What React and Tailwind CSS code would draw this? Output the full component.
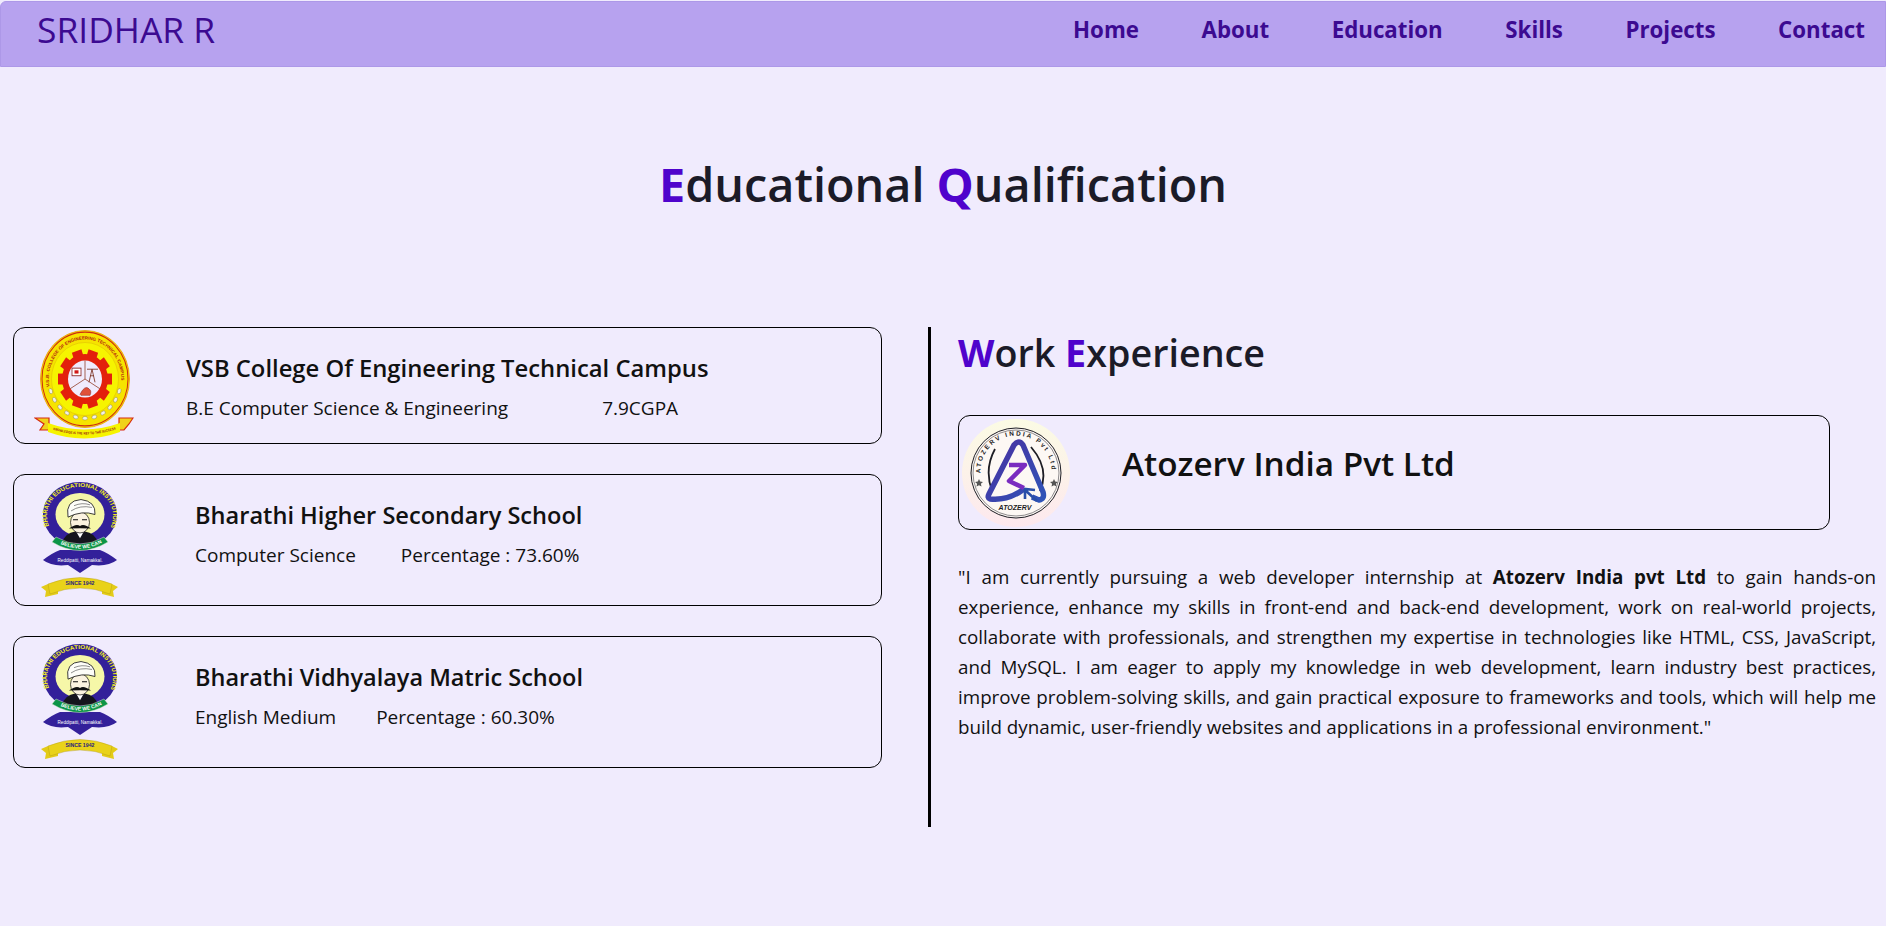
import React from 'react'

const NAV_LINKS = ['Home', 'About', 'Education', 'Skills', 'Projects', 'Contact']

function VsbLogo() {
  const teeth = [0, 36, 72, 108, 144, 180, 216, 252, 288, 324]
  const leaves = [-72, -58, -44, -30, -15, 0, 15, 30, 44, 58, 72]
  return (
    <svg viewBox="0 0 100 112" className="w-[100px] h-[112px] shrink-0">
      <g transform="translate(0 -3.3) scale(1 1.09)">
        <circle cx="51" cy="48" r="44.5" fill="#f6e300" stroke="#e89a08" strokeWidth="0.8" />
        <circle cx="51" cy="48" r="43" fill="none" stroke="#cf2a10" strokeWidth="1" />
        <circle cx="51" cy="48" r="33.5" fill="#f6f400" stroke="#d8b008" strokeWidth="0.4" />
        <path id="vsbArc" d="M 15.5 55 A 36.2 36.2 0 1 1 86.5 55" fill="none" />
        <text fontSize="4.2" fontFamily="Liberation Sans, sans-serif" fontWeight="700" fill="#b51f10">
          <textPath href="#vsbArc" textLength="122" lengthAdjust="spacingAndGlyphs">V.S.B. COLLEGE OF ENGINEERING TECHNICAL CAMPUS</textPath>
        </text>
        <g transform="translate(0 2)">
          {teeth.map(a => (
            <rect key={a} x="46" y="19" width="10" height="10" fill="#e3200c" transform={`rotate(${a + 18} 51 46)`} />
          ))}
          <circle cx="51" cy="46" r="23" fill="#e3200c" />
          <circle cx="51" cy="46" r="17" fill="#f0ebfd" />
          <path d="M51 29 V46 L36 55 M51 46 L66 55" stroke="#a05a4a" strokeWidth="0.9" fill="none" />
          <rect x="38" y="36" width="9" height="7" fill="#fff" stroke="#8a2020" strokeWidth="0.8" />
          <rect x="40.5" y="38" width="4" height="3" fill="#d01818" />
          <path d="M55 49 L58 37 L61 49 M56 43 H60 M53 37 H64" stroke="#7a3020" strokeWidth="0.8" fill="none" />
          <path d="M46 60 Q51 51 55 55 Q58 57 56 61 H47 Z" fill="#e0503a" stroke="#8a2020" strokeWidth="0.5" />
        </g>
        {leaves.map(a => (
          <ellipse key={a} cx="51" cy="84" rx="2.5" ry="1.7" fill="#f4f1e4" stroke="#7b7a50" strokeWidth="0.4" transform={`rotate(${a} 51 48)`} />
        ))}
      </g>
      <path d="M1 88 H15 V100 H6 L10 94 Z M99 88 H85 V100 H90 L95 94 Z" fill="#f0d21a" stroke="#d62a10" strokeWidth="1.2" />
      <path d="M14 93 Q50 106 86 93 V102 Q50 115 14 102 Z" fill="#f6f400" />
      <path id="vsbRibbon" d="M17 99 Q50 110 83 99" fill="none" />
      <text fontSize="3.5" fontFamily="Liberation Sans, sans-serif" fontWeight="700" fill="#9a1a10">
        <textPath href="#vsbRibbon" startOffset="3%" textLength="64" lengthAdjust="spacingAndGlyphs">KNOWLEDGE IS THE KEY TO THE SUCCESS</textPath>
      </text>
    </svg>
  )
}

function BharathiLogo({ id }) {
  return (
    <svg viewBox="0 0 80 118" className="w-[80px] h-[118px] shrink-0">
      <path d="M3 79 Q12 72 20 69 H60 Q68 72 77 79 Q68 86 52 84 L40 92 L28 84 Q12 86 3 79 Z" fill="#33209a" />
      <g transform="translate(40 33.5) scale(1 0.88) translate(-40 -37)">
        <circle cx="40" cy="37" r="37" fill="#33209a" />
        <circle cx="40" cy="37" r="24.5" fill="#f6f7a8" />
        <path id={`${id}-arc`} d="M 9 50 A 33 33 0 1 1 71 50" fill="none" />
        <text fontSize="6.4" fontFamily="Liberation Sans, sans-serif" fontWeight="700" fill="#f4f020">
          <textPath href={`#${id}-arc`} textLength="128" lengthAdjust="spacingAndGlyphs">BHARATHI EDUCATIONAL INSTITUTIONS</textPath>
        </text>
        <path d="M22 70 Q24 58 36 56 H44 Q56 58 58 70 Z" fill="#15151d" />
        <path d="M36 56 L40 64 L44 56 Z" fill="#fff" />
        <ellipse cx="40" cy="46" rx="9.5" ry="12" fill="#fbf3e0" stroke="#1b1b1b" strokeWidth="0.8" />
        <path d="M28 40 Q25 21 41 20 Q56 22 55 37 Q42 32 28 40 Z" fill="#fdfdf8" stroke="#1b1b1b" strokeWidth="0.9" />
        <path d="M31 33 Q40 26 52 29 M34 27 Q42 23 50 26" stroke="#555" strokeWidth="0.7" fill="none" />
        <path d="M33 43 h5 M42 43 h5" stroke="#111" strokeWidth="1.3" />
        <path d="M29 53 Q36 47 40 50 Q44 47 51 53 Q44 52.5 40 52.5 Q36 52.5 29 53 Z" fill="#111" />
      </g>
      <path d="M16 56 Q40 70 64 56 L68 61 Q40 78 12 61 Z" fill="#0b9447" stroke="#dfe8d0" strokeWidth="0.5" />
      <path id={`${id}-motto`} d="M17 61 Q40 74 63 61" fill="none" />
      <text fontSize="5" fontFamily="Liberation Sans, sans-serif" fontWeight="700" fill="#fff">
        <textPath href={`#${id}-motto`} startOffset="8%">BELIEVE WE CAN</textPath>
      </text>
      <text x="40" y="80.5" textAnchor="middle" fontSize="4.6" fontFamily="Liberation Sans, sans-serif" fill="#fff">Reddipatti, Namakkal.</text>
      <path d="M8 103 L1 106 L6 110 L5 116 L18 113 V103 Z M72 103 L78 106 L73 110 L74 116 L62 113 V103 Z" fill="#e3cb18" />
      <path d="M8 103 Q40 90 72 103 L70 113 Q40 101 10 113 Z" fill="#e9d21a" stroke="#b19a10" strokeWidth="0.4" />
      <text x="40" y="104" textAnchor="middle" fontSize="5.2" fontFamily="Liberation Sans, sans-serif" fontWeight="700" fill="#27207e">SINCE 1942</text>
    </svg>
  )
}

function AtozervLogo() {
  return (
    <svg viewBox="0 0 108 108" className="w-[108px] h-[108px] shrink-0">
      <defs>
        <linearGradient id="atozLogoBg" x1="0" y1="0" x2="0" y2="1">
          <stop offset="0" stopColor="#fbfbe4" />
          <stop offset="1" stopColor="#fde8ee" />
        </linearGradient>
        <linearGradient id="atozStroke" x1="0" y1="0" x2="1" y2="1">
          <stop offset="0" stopColor="#4a2fa0" />
          <stop offset="1" stopColor="#2f55b8" />
        </linearGradient>
      </defs>
      <circle cx="54" cy="54" r="54" fill="url(#atozLogoBg)" />
      <circle cx="54" cy="54" r="45" fill="#fdf8f4" stroke="#1d1d24" strokeWidth="1" />
      <circle cx="54" cy="54" r="43" fill="none" stroke="#1d1d24" strokeWidth="0.5" />
      <path id="atozArc" d="M 19 58 A 35.5 35.5 0 1 1 89 58" fill="none" />
      <text fontSize="6.4" fontFamily="Liberation Sans, sans-serif" fontWeight="700" fill="#1d1d24">
        <textPath href="#atozArc" startOffset="3%" textLength="112">ATOZERV INDIA Pvt Ltd</textPath>
      </text>
      <path d="M33 30 Q22 50 30 72 M69 28 Q88 50 78 72" fill="none" stroke="#1d1d24" strokeWidth="1.8" />
      <path d="M62 70 Q46 82 28 80 Q25 79 27 75 L52 26 Q57 20 61 26 L81 73 Q83 80 77 81 L70 78" fill="none" stroke="url(#atozStroke)" strokeWidth="5.5" strokeLinejoin="round" />
      <path d="M47 46 H63 L47 62 L62 69" fill="none" stroke="#7a2cc0" strokeWidth="4.5" strokeLinejoin="round" />
      <path d="M63 80 L63 70 L73 71 M63 71 L75 82" stroke="#2a4fa8" strokeWidth="2.6" fill="none" />
      <path d="M17 60 l1.2 2.6 2.8 .3 -2.1 1.9 .6 2.8 -2.5 -1.4 -2.5 1.4 .6 -2.8 -2.1 -1.9 2.8 -.3 Z M92 60 l1.2 2.6 2.8 .3 -2.1 1.9 .6 2.8 -2.5 -1.4 -2.5 1.4 .6 -2.8 -2.1 -1.9 2.8 -.3 Z" fill="#555" />
      <text x="53" y="91" textAnchor="middle" fontSize="7" fontFamily="Liberation Sans, sans-serif" fontWeight="700" fontStyle="italic" fill="#1d1d24">ATOZERV</text>
    </svg>
  )
}

function EduCard({ logo, title, titleSize, className, textClass, gap, details }) {
  return (
    <div className={`flex items-center border border-black rounded-xl ${className}`}>
      {logo}
      <div className={`flex flex-col ${textClass}`}>
        <h3 className={`leading-[34px] font-semibold text-[#111] ${titleSize}`}>{title}</h3>
        <div className={`flex text-[19px] leading-[26px] mt-[10px] text-[#111] ${gap}`}>
          {details.map(d => <span key={d}>{d}</span>)}
        </div>
      </div>
    </div>
  )
}

function Initial({ children }) {
  return <span className="text-[#4f03cc] font-bold">{children}</span>
}

export default function App() {
  return (
    <div className="min-h-[926px] bg-[#f0ebfd] overflow-hidden font-['Open_Sans','Noto_Sans',sans-serif]">
      {/* Navbar */}
      <nav className="h-[66px] mt-px flex items-center justify-between bg-[#b7a2ef] border border-[#ad98e8] rounded-tl-md pl-[36px] pr-[20px] pb-[9px]">
        <span className="text-[35.4px] leading-none font-medium text-[#3c0a91]">SRIDHAR R</span>
        <ul className="flex items-center gap-[62.5px]">
          {NAV_LINKS.map(l => (
            <li key={l} className="text-[22.3px] font-bold text-[#3c0a91]">{l}</li>
          ))}
        </ul>
      </nav>

      <h1 className="pt-[85px] text-center text-[46.8px] leading-[65px] font-semibold text-[#1b1b28]">
        <Initial>E</Initial>ducational <Initial>Q</Initial>ualification
      </h1>

      <div className="mt-[110px] flex">
        {/* Education column */}
        <div className="w-[928px] shrink-0 pl-[13px] pr-[46px] flex flex-col gap-[30px]">
          <EduCard
            logo={<div className="ml-[20px] mr-[52px]"><VsbLogo /></div>}
            title="VSB College Of Engineering Technical Campus"
            titleSize="text-[23.8px]"
            className="h-[117px]"
            gap="gap-[94px]"
            details={['B.E Computer Science & Engineering', '7.9CGPA']}
          />
          <EduCard
            logo={<div className="ml-[26px] mr-[75px]"><BharathiLogo id="bhss" /></div>}
            title="Bharathi Higher Secondary School"
            titleSize="text-[23.6px]"
            className="h-[132px]"
            textClass="pb-[14px]"
            gap="gap-[45px]"
            details={['Computer Science', 'Percentage : 73.60%']}
          />
          <EduCard
            logo={<div className="ml-[26px] mr-[75px]"><BharathiLogo id="bvms" /></div>}
            title="Bharathi Vidhyalaya Matric School"
            titleSize="text-[23.5px]"
            className="h-[132px]"
            textClass="pb-[14px]"
            gap="gap-[40px]"
            details={['English Medium', 'Percentage : 60.30%']}
          />
        </div>

        {/* Work column */}
        <div className="flex-1 h-[500px] border-l-[3px] border-black pl-[27px] pr-[10px]">
          <h2 className="text-[37.7px] leading-[52px] font-semibold text-[#1b1b28]">
            <Initial>W</Initial>ork <Initial>E</Initial>xperience
          </h2>
          <div className="mt-[36px] w-[872px] h-[115px] flex items-center border border-black rounded-xl">
            <div className="ml-[3px] mr-[52px]"><AtozervLogo /></div>
            <h3 className="pb-[20px] text-[33.3px] leading-[46px] font-semibold text-[#111]">Atozerv India Pvt Ltd</h3>
          </div>
          <p className="mt-[32px] text-[18.8px] leading-[30px] text-justify text-[#111]">
            "I am currently pursuing a web developer internship at <b>Atozerv India pvt Ltd</b> to gain hands-on experience, enhance my skills in front-end and back-end development, work on real-world projects, collaborate with professionals, and strengthen my expertise in technologies like HTML, CSS, JavaScript, and MySQL. I am eager to apply my knowledge in web development, learn industry best practices, improve problem-solving skills, and gain practical exposure to frameworks and tools, which will help me build dynamic, user-friendly websites and applications in a professional environment."
          </p>
        </div>
      </div>
    </div>
  )
}
